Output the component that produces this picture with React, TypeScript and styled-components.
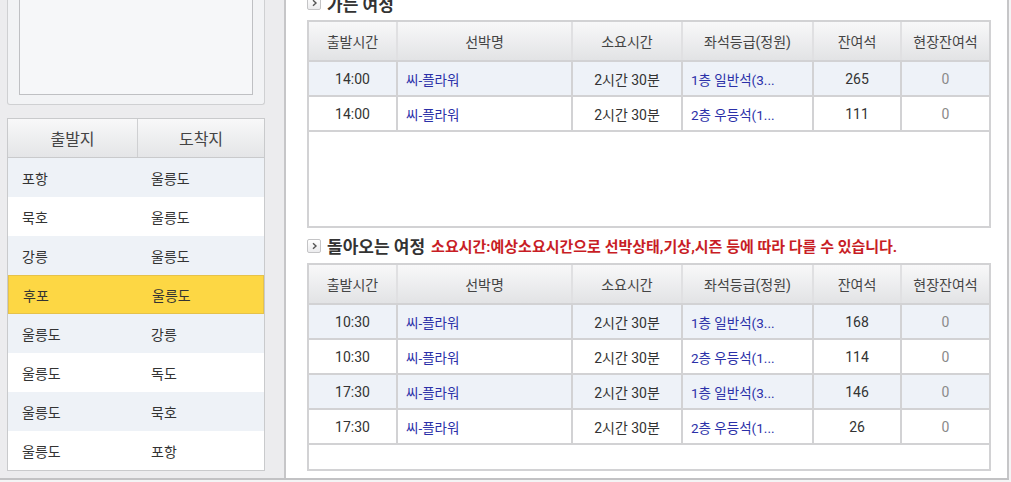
import React from "react";
import styled, { createGlobalStyle } from "styled-components";

type Trip = {
  time: string;
  ship: string;
  duration: string;
  seat: string;
  left: number;
  onsite: number;
};

const routes = [
  ["포항", "울릉도"],
  ["묵호", "울릉도"],
  ["강릉", "울릉도"],
  ["후포", "울릉도"],
  ["울릉도", "강릉"],
  ["울릉도", "독도"],
  ["울릉도", "묵호"],
  ["울릉도", "포항"],
];

const goTrips: Trip[] = [
  { time: "14:00", ship: "씨-플라워", duration: "2시간 30분", seat: "1층 일반석(3...", left: 265, onsite: 0 },
  { time: "14:00", ship: "씨-플라워", duration: "2시간 30분", seat: "2층 우등석(1...", left: 111, onsite: 0 },
];

const backTrips: Trip[] = [
  { time: "10:30", ship: "씨-플라워", duration: "2시간 30분", seat: "1층 일반석(3...", left: 168, onsite: 0 },
  { time: "10:30", ship: "씨-플라워", duration: "2시간 30분", seat: "2층 우등석(1...", left: 114, onsite: 0 },
  { time: "17:30", ship: "씨-플라워", duration: "2시간 30분", seat: "1층 일반석(3...", left: 146, onsite: 0 },
  { time: "17:30", ship: "씨-플라워", duration: "2시간 30분", seat: "2층 우등석(1...", left: 26, onsite: 0 },
];

const columns = [
  { title: "출발시간", width: 88 },
  { title: "선박명", width: 175 },
  { title: "소요시간", width: 110 },
  { title: "좌석등급(정원)", width: 131 },
  { title: "잔여석", width: 88 },
  { title: "현장잔여석", width: 88 },
];

const GlobalStyle = createGlobalStyle`
  html, body {
    margin: 0;
    padding: 0;
    background: #f4f4f5;
    overflow: hidden;
  }
  body {
    font-family: Roboto, "Noto Sans CJK KR", sans-serif;
    color: #333;
  }
`;

const TripTable = ({ trips }: { trips: Trip[] }) => (
  <TableBox>
    <Table>
      <colgroup>
        {columns.map((c) => (
          <col key={c.title} style={{ width: c.width }} />
        ))}
      </colgroup>
      <thead>
        <tr>
          {columns.map((c) => (
            <Th key={c.title}>{c.title}</Th>
          ))}
        </tr>
      </thead>
      <tbody>
        {trips.map((t, i) => (
          <BodyRow key={i} $odd={i % 2 === 0}>
            <Td>{t.time}</Td>
            <Td $align="left">
              <LinkText>{t.ship}</LinkText>
            </Td>
            <Td>{t.duration}</Td>
            <Td $align="left">
              <LinkText>{t.seat}</LinkText>
            </Td>
            <Td>{t.left}</Td>
            <Td $muted>{t.onsite}</Td>
          </BodyRow>
        ))}
      </tbody>
    </Table>
  </TableBox>
);

const Arrow = () => (
  <ArrowBox>
    <svg width="7" height="8" viewBox="0 0 7 8">
      <path d="M2 1.2 L5 4 L2 6.8" fill="none" stroke="#555" strokeWidth="1.4" />
    </svg>
  </ArrowBox>
);

const App = () => {
  return (
    <>
      <GlobalStyle />
      <Page>
        <Sidebar>
          <TopBox>
            <InnerBox />
          </TopBox>
          <RouteTable>
            <RouteHead>
              <RouteHeadCell>출발지</RouteHeadCell>
              <RouteHeadCell>도착지</RouteHeadCell>
            </RouteHead>
            {routes.map(([from, to], i) => (
              <RouteRow key={i} $odd={i % 2 === 0} $active={i === 3}>
                <RouteCell>{from}</RouteCell>
                <RouteCell>{to}</RouteCell>
              </RouteRow>
            ))}
          </RouteTable>
        </Sidebar>
        <Main>
          <SectionTitle>
            <Arrow />
            가는 여정
          </SectionTitle>
          <TripTable trips={goTrips} />
          <SectionTitle>
            <Arrow />
            돌아오는 여정
            <Notice>소요시간:예상소요시간으로 선박상태,기상,시즌 등에 따라 다를 수 있습니다.</Notice>
          </SectionTitle>
          <TripTable trips={backTrips} />
        </Main>
      </Page>
    </>
  );
};

const Page = styled.div`
  display: flex;
  width: 1009px;
  height: 494px;
  margin-top: -14px;
  border-bottom: 2px solid #c2c2c4;
  box-sizing: border-box;
`;

const Sidebar = styled.div`
  width: 286px;
  flex-shrink: 0;
  box-sizing: border-box;
  background: #ececee;
  border-right: 2px solid #c6c6c8;
  padding-left: 7px;
`;

const TopBox = styled.div`
  width: 258px;
  height: 119px;
  box-sizing: border-box;
  border: 1px solid #cfd0d2;
  border-top: none;
  border-radius: 0 0 3px 3px;
  background: #f2f3f5;
  padding: 0 11px 9px 11px;
`;

const InnerBox = styled.div`
  height: 100%;
  box-sizing: border-box;
  border: 1px solid #bfc0c3;
  border-top: none;
  background: #f6f7f9;
`;

const RouteTable = styled.div`
  margin-top: 13px;
  width: 258px;
  border: 1px solid #c9cacc;
  border-top: none;
  box-sizing: border-box;
  background: #fff;
`;

const RouteHead = styled.div`
  display: grid;
  grid-template-columns: 129px 1fr;
  height: 40px;
  border-top: 1px solid #c9cacc;
  border-bottom: 1px solid #c9cacc;
  background: linear-gradient(#f8f8f9, #e4e5e7);
  box-sizing: border-box;
`;

const RouteHeadCell = styled.div`
  display: flex;
  align-items: center;
  justify-content: center;
  font-size: 16px;
  color: #444;
  & + & {
    border-left: 1px solid #cfd0d2;
  }
`;

const RouteRow = styled.div<{ $odd: boolean; $active: boolean }>`
  display: grid;
  grid-template-columns: 129px 1fr;
  height: 39px;
  box-sizing: border-box;
  background: ${(p) => (p.$active ? "#fdd744" : p.$odd ? "#eef2f7" : "#fff")};
  border: ${(p) => (p.$active ? "1px solid #e6c24a" : "none")};
`;

const RouteCell = styled.div`
  display: flex;
  align-items: center;
  padding-left: 14px;
  font-size: 14px;
  color: #333;
`;

const Main = styled.div`
  flex: 1;
  background: #fff;
  border-right: 2px solid #c6c6c8;
  padding: 0 16px 0 21px;
`;

const SectionTitle = styled.div`
  display: flex;
  align-items: center;
  height: 34px;
  font-size: 17px;
  font-weight: 700;
  color: #333;
  white-space: nowrap;
  &:not(:first-child) {
    height: 35px;
  }
`;

const ArrowBox = styled.span`
  display: inline-flex;
  align-items: center;
  justify-content: center;
  width: 12px;
  height: 12px;
  margin-right: 6px;
  border: 1px solid #c4c4c6;
  border-radius: 2px;
  background: linear-gradient(#ffffff, #ececee);
`;

const Notice = styled.span`
  margin-left: 6px;
  font-size: 15px;
  font-weight: 700;
  color: #c81d25;
`;

const TableBox = styled.div`
  width: 684px;
  height: 208px;
  box-sizing: border-box;
  border: 2px solid #d2d2d4;
  background: #fff;
  overflow: hidden;
`;

const Table = styled.table`
  width: 679px;
  border-collapse: collapse;
  table-layout: fixed;
`;

const Th = styled.th`
  height: 38px;
  padding: 0;
  font-size: 14px;
  font-weight: 400;
  color: #444;
  background: linear-gradient(#f8f8f9, #e2e3e5);
  border-bottom: 2px solid #d2d2d4;
  & + & {
    border-left: 2px solid #e0e0e2;
  }
`;

const BodyRow = styled.tr<{ $odd: boolean }>`
  height: 35px;
  background: ${(p) => (p.$odd ? "#eef2f8" : "#fff")};
`;

const Td = styled.td<{ $align?: "left" | "center"; $muted?: boolean }>`
  padding: 0;
  padding-left: ${(p) => (p.$align === "left" ? "8px" : "0")};
  text-align: ${(p) => p.$align ?? "center"};
  font-size: 14px;
  color: ${(p) => (p.$muted ? "#8a8a8a" : "#333")};
  border-bottom: 2px solid #d2d2d4;
  white-space: nowrap;
  overflow: hidden;
  & + & {
    border-left: 2px solid #d2d2d4;
  }
`;

const LinkText = styled.span`
  font-size: 13.5px;
  color: #2b30a8;
`;

export default App;
